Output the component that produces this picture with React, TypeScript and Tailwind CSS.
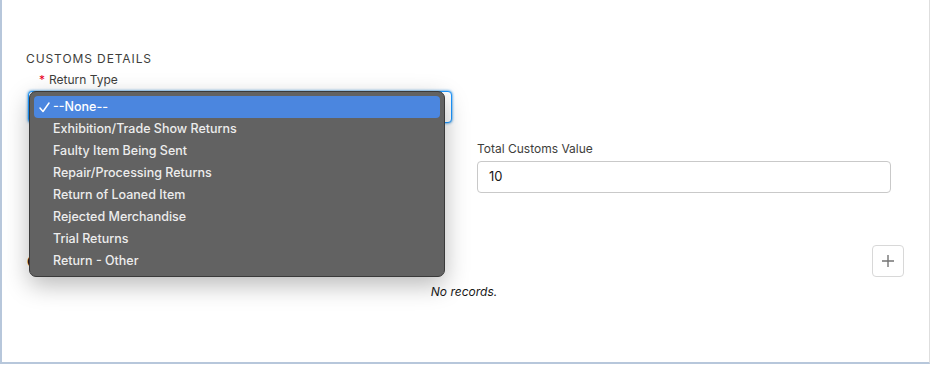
import React from "react";

const items = [
  "--None--",
  "Exhibition/Trade Show Returns",
  "Faulty Item Being Sent",
  "Repair/Processing Returns",
  "Return of Loaned Item",
  "Rejected Merchandise",
  "Trial Returns",
  "Return - Other",
];

export default function App() {
  return (
    <div className="relative w-[931px] h-[365px] bg-white overflow-hidden font-['Inter','Liberation_Sans',sans-serif] text-[#181818]">
      <div className="w-[930px] h-[364px] border-l-2 border-b-2 border-[#b7c7db] border-r border-r-[#dedede] flex flex-col">
        <div className="pt-[52px] pl-[24px] pr-[25px]">
          <div className="text-[12px] leading-[14px] tracking-[0.9px] text-[#3e3e3c] uppercase">Customs Details</div>
          <div className="mt-[7px] grid grid-cols-[424px_414px] gap-x-[25px] pl-[2px]">
            <div>
              <div className="pl-[11px] text-[12px] leading-[14px] text-[#3e3e3c] flex gap-[4px]">
                <span className="text-[#ea001e]">*</span>
                <span>Return Type</span>
              </div>
              <div className="mt-[4px] h-[32px] rounded-[4px] border border-[#1b96ff] shadow-[0_0_3px_#0176d3] bg-white" />
            </div>
            <div />
            <div className="h-[68px]" />
            <div className="pt-[19px]">
              <div className="text-[12px] leading-[14px] text-[#3e3e3c]">Total Customs Value</div>
              <div className="mt-[5px] h-[32px] rounded-[4px] border border-[#c9c9c9] flex items-center px-[11px] text-[13px]">10</div>
            </div>
          </div>
        </div>
        <div className="mt-[52px] pl-[25px] pr-[25px] flex items-center justify-between">
          <div className="text-[14px] font-semibold text-[#181818]">Cu</div>
          <button className="w-[32px] h-[32px] rounded-[4px] border border-[#d8d8d8] flex items-center justify-center bg-white">
            <svg width="14" height="14" viewBox="0 0 14 14">
              <path d="M7 1v12M1 7h12" stroke="#747474" strokeWidth="1.4" />
            </svg>
          </button>
        </div>
        <div className="mt-[6px] text-center text-[12px] italic text-[#181818] pr-[3px]">No records.</div>
      </div>

      <div className="absolute left-[29px] top-[91px] w-[416px] h-[186px] rounded-[7px] border border-[#3a3a3a] bg-[#626262] shadow-[0_8px_24px_rgba(0,0,0,0.28)] p-[4px] flex flex-col">
        {items.map((it, i) => (
          <div
            key={it}
            className={
              i === 0
                ? "h-[22px] rounded-[4px] bg-[#4b86df] flex items-center pt-[1px] text-white text-[12.5px] font-medium"
                : "h-[22px] flex items-center pt-[1px] text-[#ededed] text-[12.5px] font-medium"
            }
          >
            <span className="w-[19px] flex justify-center pl-[2px]">
              {i === 0 && (
                <svg width="11" height="11" viewBox="0 0 11 11">
                  <path d="M1 6l3 3.5L10 1" fill="none" stroke="white" strokeWidth="1.5" strokeLinecap="round" strokeLinejoin="round" />
                </svg>
              )}
            </span>
            <span>{it}</span>
          </div>
        ))}
      </div>
    </div>
  );
}
